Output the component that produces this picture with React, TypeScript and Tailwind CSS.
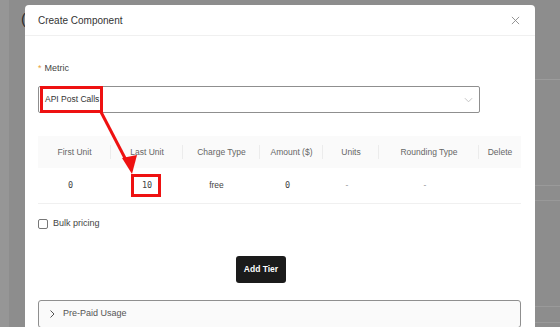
import React from "react";

const cols = [
  { w: 73, h: "First Unit", v: "0", mono: true, pr: 8 },
  { w: 72, h: "Last Unit", v: "10", mono: true, pr: 0 },
  { w: 77, h: "Charge Type", v: "free", mono: false, pr: 10 },
  { w: 63, h: "Amount ($)", v: "0", mono: true, pr: 8 },
  { w: 56, h: "Units", v: "-", mono: false, pr: 8 },
  { w: 100, h: "Rounding Type", v: "-", mono: false, pr: 8 },
  { w: 42, h: "Delete", v: "", mono: false, pr: 0 },
];

export default function App() {
  return (
    <div
      className="relative h-[327px] w-[560px] overflow-hidden bg-[#8d8d8d]"
      style={{ fontFamily: "'Liberation Sans', Arial, sans-serif" }}
    >
      {/* background page hints (behind the modal) */}
      <div className="absolute left-0 top-0 h-full w-[9px] bg-[#969696]" />
      <div className="absolute left-[21px] top-[11px] text-[15px] leading-none text-[#2a2a2a]">(</div>
      <div className="absolute right-0 top-[79px] flex w-[25px] flex-col">
        <div className="h-px bg-[#9c9c9c]" />
        <div className="mt-[105px] h-px bg-[#9a9a9a]" />
        <div className="mt-[14px] h-px bg-[#999999]" />
        <div className="mt-[105px] h-px bg-[#9a9a9a]" />
        <div className="mt-[15px] h-px bg-[#9a9a9a]" />
      </div>

      <div className="relative ml-[25px] mt-[5px] w-[510px] rounded-[4px] bg-white pb-[40px]">
        {/* header */}
        <div className="flex h-[31px] items-center justify-between border-b border-[#f0f0f0] px-[13px] pt-[1px]">
          <span className="text-[10px] text-[#333]">Create Component</span>
          <svg width="9" height="9" viewBox="0 0 10 10" className="mr-[2px]">
            <path d="M1 1L9 9M9 1L1 9" stroke="#8a8a8a" strokeWidth="1" />
          </svg>
        </div>

        {/* body */}
        <div className="px-[13px] pt-[26px]">
          <div className="flex items-center text-[9px] leading-[12px] text-[#444]">
            <span className="mr-[3px] text-[#e7a13b]">*</span>
            <span>Metric</span>
          </div>
          <div className="mt-[12px] flex h-[27px] w-[442px] items-center justify-between rounded-[2px] border border-[#8f8f8f] bg-white pl-[6px] pr-[6px]">
            <span className="text-[8.5px] text-[#333]">API Post Calls</span>
            <svg width="9" height="6" viewBox="0 0 10 6">
              <path d="M1 1L5 5L9 1" stroke="#bdbdbd" strokeWidth="1" fill="none" />
            </svg>
          </div>

          {/* table */}
          <div className="mt-[23px] w-[483px]">
            <div className="flex h-[32px] items-center bg-[#fafafa]">
              {cols.map((c, i) => (
                <div
                  key={c.h}
                  className="relative flex h-full items-center justify-center text-[8.5px] text-[#666]"
                  style={{ width: c.w }}
                >
                  {c.h}
                  {i < cols.length - 1 && (
                    <span className="absolute right-0 top-[9px] h-[14px] w-px bg-[#ececec]" />
                  )}
                </div>
              ))}
            </div>
            <div className="flex h-[36px] items-center border-b border-[#f0f0f0]">
              {cols.map((c) => (
                <div
                  key={c.h}
                  className={
                    "flex h-full items-center justify-center text-[8.5px] " +
                    (c.v === "-" ? "text-[#999]" : "text-[#444]")
                  }
                  style={{
                    width: c.w,
                    paddingRight: c.pr,
                    fontFamily: c.mono ? "'DejaVu Sans Mono', monospace" : undefined,
                  }}
                >
                  {c.v}
                </div>
              ))}
            </div>
          </div>

          {/* bulk pricing */}
          <div className="mt-[13px] flex items-center gap-[5px]">
            <div className="h-[10px] w-[10px] rounded-[2px] border border-[#777] bg-white" />
            <span className="text-[9px] text-[#444]">Bulk pricing</span>
          </div>

          {/* add tier */}
          <div className="mt-[25px] flex justify-center pr-[38px]">
            <button className="h-[27px] w-[50px] rounded-[3px] bg-[#1b1b1b] text-[8.5px] font-bold text-white">
              Add Tier
            </button>
          </div>

          {/* collapse */}
          <div className="mt-[17px] flex h-[28px] w-[483px] items-center rounded-[3px] border border-[#8f8f8f] bg-[#fafafa] pl-[11px]">
            <svg width="5" height="8" viewBox="0 0 5 8">
              <path d="M0.5 0.5L4 4L0.5 7.5" stroke="#555" strokeWidth="1" fill="none" />
            </svg>
            <span className="ml-[8px] text-[9px] text-[#555]">Pre-Paid Usage</span>
          </div>
        </div>
      </div>

      {/* red annotations drawn over the screenshot */}
      <div className="absolute left-[40px] top-[86px] h-[27px] w-[63px] border-[3px] border-[#ee1111]" />
      <div className="absolute left-[131px] top-[174px] h-[23px] w-[30px] border-[3px] border-[#ee1111]" />
      <svg className="absolute left-0 top-0" width="560" height="327" viewBox="0 0 560 327">
        <line x1="101" y1="112" x2="127" y2="162" stroke="#ee1111" strokeWidth="3" />
        <polygon points="132,174 122,158 137,155" fill="#ee1111" />
      </svg>
    </div>
  );
}
